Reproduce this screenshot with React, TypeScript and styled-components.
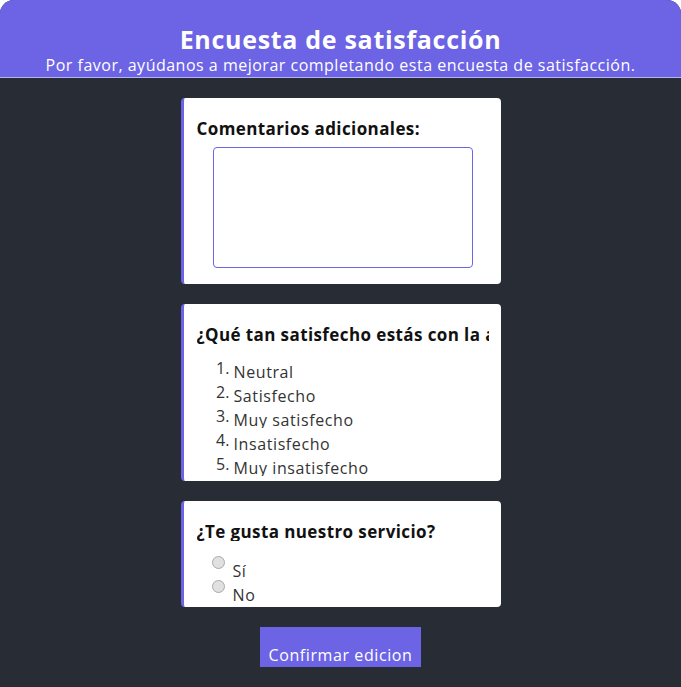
import React from 'react';
import styled, { createGlobalStyle } from 'styled-components';

const GlobalStyle = createGlobalStyle`
  html, body {
    margin: 0;
    padding: 0;
    background: #ffffff;
  }
  body {
    font-family: "Open Sans", "Liberation Sans", sans-serif;
  }
`;

const purple = '#6c63e5';

const Page = styled.div`
  min-height: 100vh;
  background-color: #282c34;
  border-radius: 14px 14px 0 0;
  overflow: hidden;
  box-sizing: border-box;
`;

const Header = styled.header`
  background-color: ${purple};
  border-bottom: 1px solid #b7b2f2;
  color: #ffffff;
  text-align: center;
  padding: 25px 0 0;
  box-sizing: border-box;
  height: 78px;
`;

const Title = styled.h1`
  margin: 0;
  font-size: 25px;
  font-weight: 700;
  line-height: 28px;
  letter-spacing: 0.7px;
`;

const Subtitle = styled.p`
  margin: 1px 0 0;
  font-size: 16px;
  line-height: 22px;
  letter-spacing: 0.5px;
`;

const Main = styled.main`
  display: flex;
  flex-direction: column;
  align-items: center;
  gap: 20px;
  padding: 20px 0 20px;
`;

const Card = styled.section`
  width: 320px;
  box-sizing: border-box;
  background: #ffffff;
  border-left: 3px solid ${purple};
  border-radius: 4px;
  padding: 22px 12px 0 13px;
  overflow: hidden;
`;

const Question = styled.h2`
  margin: 0;
  font-size: 17px;
  font-weight: 700;
  color: #111111;
  line-height: 18px;
  height: 18px;
  letter-spacing: 0.4px;
  white-space: nowrap;
  overflow: hidden;
`;

const Comments = styled.textarea`
  display: block;
  width: 260px;
  height: 121px;
  box-sizing: border-box;
  margin: 9px auto 16px;
  border: 1px solid ${purple};
  border-radius: 4px;
  resize: none;
  outline: none;
`;

const Options = styled.ol`
  margin: 12px 0 0;
  padding: 0 0 5px 37px;
  font-size: 16px;
  color: #333333;
  font-weight: 400;
`;

const Option = styled.li`
  line-height: 24px;
`;

const OptionText = styled.span<{ $drop: number }>`
  display: inline-block;
  overflow: hidden;
  line-height: 16px;
  height: 16px;
  letter-spacing: 0.6px;
  vertical-align: ${(p) => -p.$drop}px;
`;

const RadioGroup = styled.div`
  margin-top: 10px;
  padding: 0 0 8px 15px;
  font-size: 16px;
  color: #333333;
`;

const RadioRow = styled.label`
  display: block;
  line-height: 24px;
  height: 24px;
`;

const Radio = styled.input`
  appearance: none;
  width: 13px;
  height: 13px;
  margin: 0 8px 0 0;
  box-sizing: border-box;
  border: 1px solid #a9a9a9;
  border-radius: 50%;
  background: #e0e0e0;
  vertical-align: baseline;
`;

const Submit = styled.button`
  background: ${purple};
  color: #ffffff;
  border: none;
  border-radius: 0;
  font-family: inherit;
  font-size: 16px;
  letter-spacing: 0.6px;
  padding: 18px 8px 1px;
  line-height: 21px;
  height: 40px;
`;

const levels = ['Neutral', 'Satisfecho', 'Muy satisfecho', 'Insatisfecho', 'Muy insatisfecho'];

export default function App() {
  return (
    <>
      <GlobalStyle />
      <Page>
        <Header>
          <Title>Encuesta de satisfacción</Title>
          <Subtitle>Por favor, ayúdanos a mejorar completando esta encuesta de satisfacción.</Subtitle>
        </Header>
        <Main>
          <Card>
            <Question>Comentarios adicionales:</Question>
            <Comments />
          </Card>
          <Card>
            <Question>¿Qué tan satisfecho estás con la atención recibida?</Question>
            <Options>
              {levels.map((l) => (
                <Option key={l}>
                  <OptionText $drop={6}>{l}</OptionText>
                </Option>
              ))}
            </Options>
          </Card>
          <Card>
            <Question>¿Te gusta nuestro servicio?</Question>
            <RadioGroup>
              <RadioRow>
                <Radio type="radio" name="gusta" disabled />
                <OptionText $drop={10}>Sí</OptionText>
              </RadioRow>
              <RadioRow>
                <Radio type="radio" name="gusta" disabled />
                <OptionText $drop={10}>No</OptionText>
              </RadioRow>
            </RadioGroup>
          </Card>
          <Submit>Confirmar edicion</Submit>
        </Main>
      </Page>
    </>
  );
}
